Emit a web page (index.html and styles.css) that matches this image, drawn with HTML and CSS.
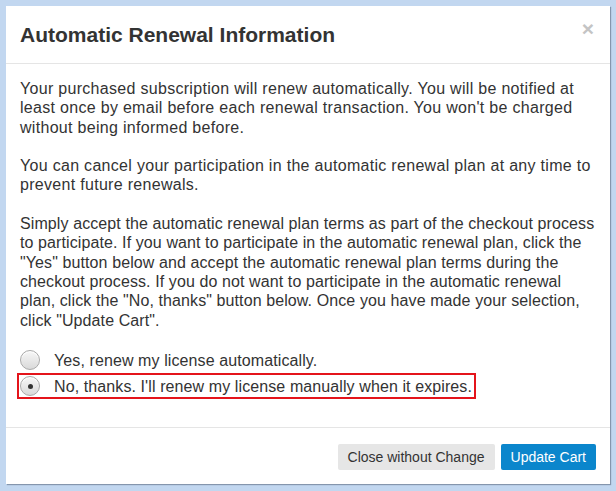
FILE: index.html
```html
<!DOCTYPE html>
<html lang="en">
<head>
  <meta charset="UTF-8" />
  <title>Automatic Renewal Information</title>
  <link rel="stylesheet" href="styles.css">
</head>
<body>
  <div class="modal">
    <div class="modal-header">
      <h2>Automatic Renewal Information</h2>
      <span class="close">&times;</span>
    </div>

    <div class="modal-body">
      <p>Your purchased subscription will renew automatically. You will be notified at least once by email before each renewal transaction. You won't be charged without being informed before.</p>
      <p>You can cancel your participation in the automatic renewal plan at any time to prevent future renewals.</p>
      <p class="tight">Simply accept the automatic renewal plan terms as part of the checkout process<br>
        to participate. If you want to participate in the automatic renewal plan, click the<br>
        "Yes" button below and accept the automatic renewal plan terms during the<br>
        checkout process. If you do not want to participate in the automatic renewal<br>
        plan, click the "No, thanks" button below. Once you have made your selection,<br>
        click "Update Cart".</p>

      <div class="choices">
        <label class="choice"><span class="radio"></span>Yes, renew my license automatically.</label>
        <label class="choice highlight"><span class="radio checked"></span>No, thanks. I'll renew my license manually when it expires.</label>
      </div>
    </div>

    <div class="modal-footer">
      <button class="btn">Close without Change</button>
      <button class="btn btn-primary">Update Cart</button>
    </div>
  </div>
</body>
</html>
```

FILE: styles.css
```css
html, body {
  height: 100%;
}
body {
  margin: 0;
  padding: 6px 6px 0 6px;
  box-sizing: border-box;
  background: #c2d7f0;
  font-family: "Liberation Sans", Arial, sans-serif;
  color: #333;
}
.modal {
  background: #fff;
  height: 478px;
  box-shadow: 1px 1px 1px rgba(60,70,90,0.45);
  display: flex;
  flex-direction: column;
}
.modal-header {
  display: flex;
  justify-content: space-between;
  align-items: flex-start;
  padding: 17px 14px 17px 14px;
  border-bottom: 1px solid #e5e5e5;
}
.modal-header h2 {
  margin: 0;
  font-size: 21px;
  line-height: 23px;
  font-weight: bold;
  color: #333;
}
.close {
  font-size: 21px;
  font-weight: bold;
  line-height: 16px;
  margin-top: -2px;
  margin-right: 2px;
  color: #c4c4c4;
}
.modal-body {
  flex: 1;
  padding: 15px 14px 0 14px;
  font-size: 16px;
  line-height: 19.3px;
}
.modal-body p {
  margin: 0 0 19.3px 0;
  letter-spacing: 0.3px;
}
.modal-body p.tight {
  letter-spacing: 0.1px;
  white-space: nowrap;
}
.choices {
  margin: -2px 0 0 -3px;
  display: flex;
  flex-direction: column;
  align-items: flex-start;
}
.choice {
  display: inline-flex;
  align-items: center;
  height: 22px;
  padding: 0 2px 0 1px;
  border: 2px solid transparent;
  color: #333;
  letter-spacing: 0.1px;
}
.choice.highlight {
  border-color: #e4141b;
}
.radio {
  width: 18px;
  height: 18px;
  margin-right: 14px;
  border: 1px solid #a9a9a9;
  border-radius: 50%;
  background: linear-gradient(#f7f7f7, #d9d9d9);
  box-shadow: inset 0 1px 1px #fff;
  display: flex;
  align-items: center;
  justify-content: center;
}
.radio.checked::after {
  content: "";
  width: 5px;
  height: 5px;
  border-radius: 50%;
  background: #333;
}
.modal-footer {
  display: flex;
  justify-content: flex-end;
  gap: 6px;
  padding: 16px 14px 14px 14px;
  border-top: 1px solid #e5e5e5;
}
.btn {
  height: 26px;
  padding: 0 10px;
  border: none;
  border-radius: 2px;
  background: #e6e6e6;
  color: #333;
  font-family: "Liberation Sans", Arial, sans-serif;
  font-size: 14px;
}
.btn-primary {
  background: #0b86cc;
  color: #fff;
}
```
